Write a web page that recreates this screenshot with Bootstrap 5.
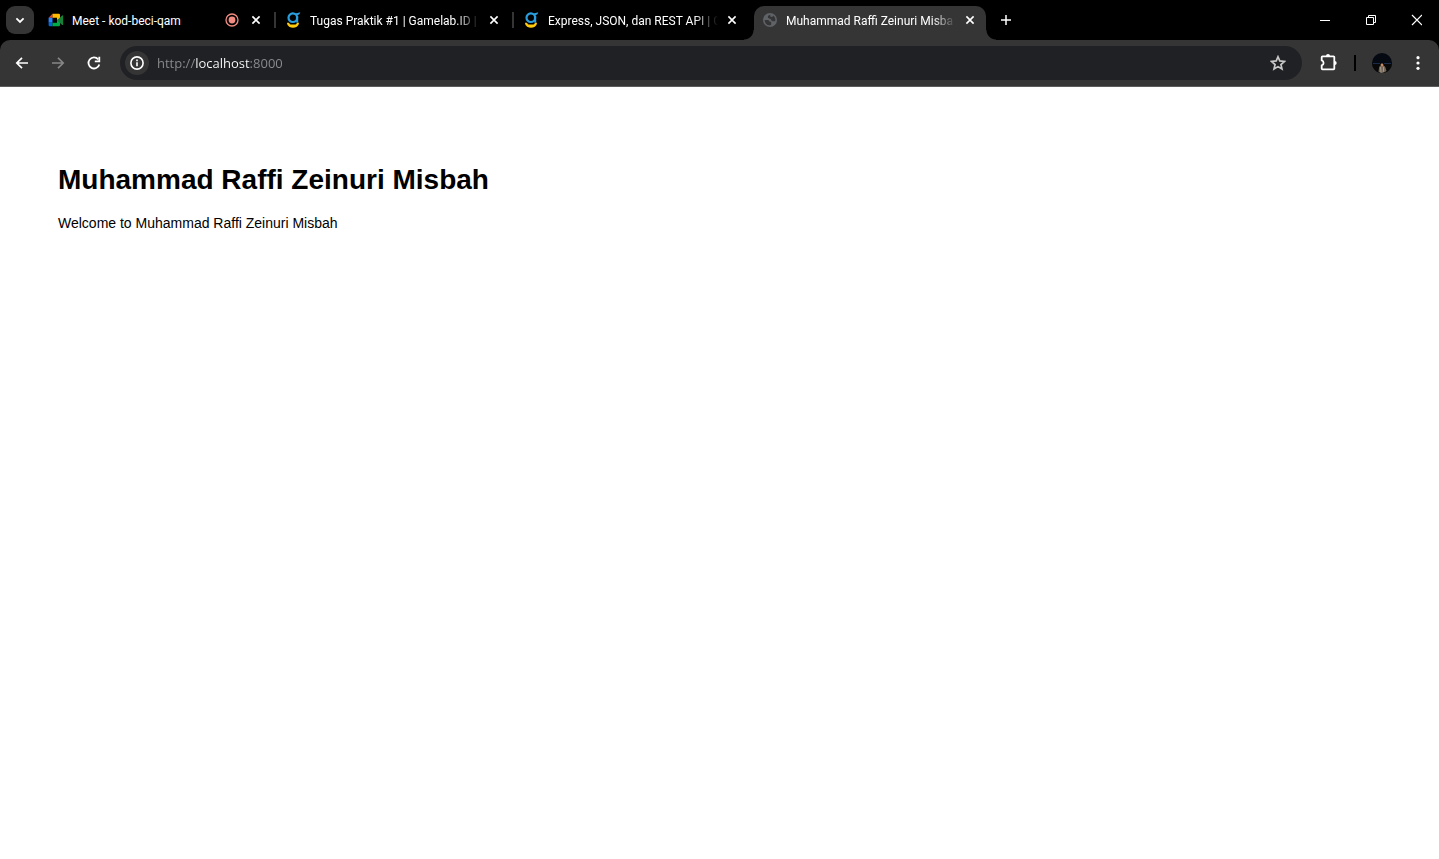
<!DOCTYPE html>
<html lang="id">
<head>
<meta charset="utf-8">
<meta name="viewport" content="width=device-width, initial-scale=1">
<title>Muhammad Raffi Zeinuri Misbah</title>
<link href="https://cdn.jsdelivr.net/npm/bootstrap@5.3.0/dist/css/bootstrap.min.css" rel="stylesheet">
<style>
  body { font-family: "Liberation Sans", Arial, sans-serif; color: #000; }
  svg { display: block; flex: none; }
  .browser { background: #000; font-family: "Open Sans", "Segoe UI", sans-serif; }
  .strip { height: 40px; padding-left: 6px; }
  .tool-btn { border: 0; background: none; color: #fff; padding: 0; display: grid; place-items: center; flex: none; }
  .tool-btn.muted { color: #868686; }
  .tool-btn.star { color: #c7c7c7; }
  .tab-search { width: 28px; height: 28px; border-radius: 9px; background: #353535; margin: 0 6px 0 0; }
  .tab-list { gap: 6px; margin: 6px 0 0; min-width: 0; }
  .tab-item { position: relative; width: 232px; height: 34px; padding: 0 8px 6px; gap: 8px; color: #fff; flex: 0 1 auto; min-width: 0; }
  .tab-item.divided::after { content: ""; position: absolute; left: 234px; top: 6px; width: 2px; height: 16px; background: #353535; }
  .tab-item.current { background: #353535; border-radius: 10px 10px 0 0; }
  .tab-item.current::before, .tab-item.current::after { content: ""; position: absolute; bottom: 0; width: 10px; height: 10px; }
  .tab-item.current::before { left: -10px; background: radial-gradient(circle at 0 0, transparent 9px, #353535 10px); }
  .tab-item.current::after { right: -10px; background: radial-gradient(circle at 100% 0, transparent 9px, #353535 10px); }
  .tab-title { font-family: Roboto, "Segoe UI", sans-serif; font-size: 12px; line-height: 16px; padding-top: 2px; margin-right: -2px; color: #fff; text-decoration: none; white-space: nowrap; overflow: hidden; flex: 1; }
  .fade-end { -webkit-mask-image: linear-gradient(to right, #000 calc(100% - 24px), transparent); mask-image: linear-gradient(to right, #000 calc(100% - 24px), transparent); }
  .tab-close { width: 16px; height: 16px; }
  .new-tab { width: 28px; height: 28px; margin-left: 6px; }
  .win-btn { width: 46px; height: 40px; }
  .toolbar { height: 47px; padding: 6px 7px 6px 8px; background: #353535; border-radius: 10px 10px 0 0; border-bottom: 1px solid #5c5c5c; }
  .nav-btn { width: 28px; height: 28px; margin-right: 8px; }
  .address { height: 34px; border-radius: 17px; background: #202124; padding: 0 16px 0 3px; margin-left: 4px; }
  .site-info { width: 24px; height: 24px; margin: 0 2px; border-radius: 50%; background: #353535; }
  .url { border: 0; outline: 0; padding: 0; margin-left: 6px; height: 28px; min-width: 0; font-size: 13px; color: #9aa0a6;
    background: linear-gradient(to right, #8b8d90 39px, #fff 39px, #fff 93px, #8b8d90 93px);
    -webkit-background-clip: text; background-clip: text; -webkit-text-fill-color: transparent; }
  .bar-sep { width: 2px; height: 16px; background: #000; margin: 0 12px; }
  .page-view { padding: 77px 58px 50px; font-size: 14px; line-height: 16px; }
  .page-view h1 { font-size: 28px; line-height: 32px; font-weight: 700; margin: 0 0 19px; }
</style>
</head>
<body class="bg-white">
<svg width="0" height="0" class="position-absolute" aria-hidden="true">
  <defs>
    <symbol id="x" viewBox="0 0 16 16"><path d="M4.400 4.400l7.200 7.200M11.600 4.400l-7.200 7.200" stroke="currentColor" stroke-width="1.600" fill="none"/></symbol>
    <symbol id="gl" viewBox="0 0 16 16">
      <circle cx="6.800" cy="5.700" r="4.300" fill="none" stroke="#2a9fe0" stroke-width="2.200"/>
      <path d="M9 1.500Q11.500 1.400 14.300.300Q14 3 11.300 3.600z" fill="#2a9fe0"/>
      <path d="M11.200 4v6.600" stroke="#2a9fe0" stroke-width="2"/>
      <path d="M.900 10.800h2.200q.4 1.400 1.400 1.700h5q1-.3 1.400-1.700h2.200q-.2 2.800-2.300 4-1.800.900-3.800.900t-3.800-.900q-2.100-1.200-2.300-4z" fill="#ffc90e"/>
    </symbol>
  </defs>
</svg>

<header class="browser">
  <div class="strip d-flex align-items-center">
    <button class="tool-btn tab-search" aria-label="Search tabs"><svg width="16" height="16" viewBox="0 0 16 16"><path d="M4.400 6.300L8 9.900l3.600-3.600" fill="none" stroke="currentColor" stroke-width="1.800"/></svg></button>
    <nav class="tab-list d-flex align-self-start" aria-label="Tabs">
      <div class="tab-item divided d-flex align-items-center">
        <svg width="16" height="16" viewBox="0 0 16 16"><path d="M.600 5.700L4.500 1.800v3.900z" fill="#ea4335"/><path d="M.600 5.700h3.900v5H.600z" fill="#2684fc"/><path d="M.600 10.700h3.900v3.500H1.800q-1.200 0-1.200-1.200z" fill="#0066da"/><path d="M4.500 1.800h6.300q1.200 0 1.200 1.200v3.200L9 8.300V5.700H4.500z" fill="#ffba00"/><path d="M4.500 10.700H9V8l3-1v6q0 1.200-1.200 1.200H4.500z" fill="#00ac47"/><path d="M9 8.200l5.200-4.800q1-.6 1 .5v8.500q0 1-1 .5z" fill="#188038"/></svg>
        <a class="tab-title" href="#">Meet - kod-beci-qam</a>
        <svg width="16" height="16" viewBox="0 0 16 16" role="img" aria-label="Recording"><circle cx="8" cy="8" r="6" fill="none" stroke="#f28b82" stroke-width="1.300"/><circle cx="8" cy="8" r="3.400" fill="#f28b82"/></svg>
        <button class="tool-btn tab-close" aria-label="Close tab"><svg width="16" height="16"><use href="#x"/></svg></button>
      </div>
      <div class="tab-item divided d-flex align-items-center">
        <svg width="16" height="16"><use href="#gl"/></svg>
        <a class="tab-title fade-end" href="#">Tugas Praktik #1 | Gamelab.ID |</a>
        <button class="tool-btn tab-close" aria-label="Close tab"><svg width="16" height="16"><use href="#x"/></svg></button>
      </div>
      <div class="tab-item d-flex align-items-center">
        <svg width="16" height="16"><use href="#gl"/></svg>
        <a class="tab-title fade-end" href="#">Express, JSON, dan REST API | G</a>
        <button class="tool-btn tab-close" aria-label="Close tab"><svg width="16" height="16"><use href="#x"/></svg></button>
      </div>
      <div class="tab-item current d-flex align-items-center">
        <svg width="16" height="16" viewBox="0 0 16 16"><circle cx="8" cy="8" r="7" fill="#5f6368"/><path d="M2.600 8h3.200q1.600.2 1.800 1.800h1.600v2.600l-1.200 1.200Q2.800 13 2.600 8zM8.200 2.700Q6 3.200 5.800 4.800q-.1 1.500 1.500 1.700 1.800.1 2 1.600.2 1.200 1.700 1.200h2.200Q14 5.300 11 3.400q0 1.500-1.600 1.600-1.400 0-1.200-2.300z" fill="#353535"/></svg>
        <a class="tab-title fade-end" href="#" aria-current="page">Muhammad Raffi Zeinuri Misba</a>
        <button class="tool-btn tab-close" aria-label="Close tab"><svg width="16" height="16"><use href="#x"/></svg></button>
      </div>
    </nav>
    <button class="tool-btn new-tab" aria-label="New tab"><svg width="16" height="16" viewBox="0 0 16 16"><path d="M8 3v10M3 8h10" stroke="currentColor" stroke-width="1.500"/></svg></button>
    <div class="d-flex ms-auto">
      <button class="tool-btn win-btn" aria-label="Minimize"><svg width="12" height="12" viewBox="0 0 12 12"><path d="M2 6.500h10" stroke="currentColor"/></svg></button>
      <button class="tool-btn win-btn" aria-label="Restore"><svg width="12" height="12" viewBox="0 0 12 12"><path d="M2.500 3.500h7v7h-7zM4.500 3.500v-2h7v7h-2" fill="none" stroke="currentColor"/></svg></button>
      <button class="tool-btn win-btn" aria-label="Close"><svg width="12" height="12" viewBox="0 0 12 12"><path d="M2 1l10 10M12 1L2 11" stroke="currentColor" stroke-width="1.200"/></svg></button>
    </div>
  </div>

  <div class="toolbar d-flex align-items-center">
    <button class="tool-btn nav-btn" aria-label="Back"><svg width="16" height="16" viewBox="0 0 16 16"><path d="M14 8H3M8 2.800L2.800 8 8 13.200" fill="none" stroke="currentColor" stroke-width="1.700"/></svg></button>
    <button class="tool-btn muted nav-btn" aria-label="Forward"><svg width="16" height="16" viewBox="0 0 16 16"><path d="M2 8h11M8 2.800L13.200 8 8 13.200" fill="none" stroke="currentColor" stroke-width="1.700"/></svg></button>
    <button class="tool-btn nav-btn" aria-label="Reload"><svg width="16" height="16" viewBox="0 0 16 16"><path d="M13.300 9.400A5.500 5.500 0 1 1 12.200 4.400" fill="none" stroke="currentColor" stroke-width="1.800"/><path d="M14.200 1.800v5.400H8.800V5.400h3.600V1.800z" fill="currentColor"/></svg></button>
    <form class="address d-flex align-items-center flex-fill">
      <button type="button" class="tool-btn site-info" aria-label="Site information"><svg width="16" height="16" viewBox="0 0 16 16"><circle cx="8" cy="8" r="6.100" fill="none" stroke="currentColor" stroke-width="1.600"/><path d="M8 7.300v3.900M8 4.600v1.600" stroke="currentColor" stroke-width="1.600"/></svg></button>
      <input class="url flex-fill" type="text" aria-label="Address" value="http://localhost:8000">
      <button type="button" class="tool-btn star" aria-label="Bookmark"><svg width="16" height="16" viewBox="0 0 18 18"><path d="M9 2l2 4.700 5.300.500-4 3.500 1.200 5.100L9 13.100l-4.500 2.700 1.200-5.100-4-3.500L7 6.700z" fill="none" stroke="currentColor" stroke-width="1.900"/></svg></button>
    </form>
    <button class="tool-btn ms-3" aria-label="Extensions"><svg width="20" height="20" viewBox="0 0 20 20"><path d="M4.500 3.400h11a.8.800 0 0 1 .8.800v11.400a.8.800 0 0 1-.8.800h-11a.8.800 0 0 1-.8-.800v-3.200a2.600 2.600 0 0 0 0-5V4.200a.8.800 0 0 1 .8-.800z" fill="none" stroke="currentColor" stroke-width="1.800" stroke-linejoin="round"/><path d="M8 3a2 2 0 0 1 4 0zM16.700 7.900a2 2 0 0 1 0 4z" fill="currentColor"/></svg></button>
    <span class="bar-sep ms-3"></span>
    <button class="tool-btn" aria-label="Profile"><svg width="28" height="20" viewBox="0 0 28 20"><circle cx="14" cy="10" r="10" fill="#050911"/><path d="M4.200 11.200h19.600l-.6 2.600q-2.600 6.200-9.200 6.200T4.800 13.800z" fill="#080808"/><path d="M5 10.500h7M16 10.500h7" stroke="#1a2b49" stroke-width="1"/><path d="M10.500 18.800l.7-5 2-1.500h2l2 1.400 1.300 4.300q-2 1.700-4.500 1.900-2 0-3.500-1.100z" fill="#74675a"/><path d="M12.600 14l.4 5.600M15.600 13.800l-.2 5" stroke="#a59b8c"/><circle cx="14" cy="12" r="1.400" fill="#c98a60"/></svg></button>
    <button class="tool-btn ms-2" aria-label="Menu"><svg width="28" height="20" viewBox="0 0 28 20"><g fill="currentColor"><circle cx="14" cy="4.700" r="1.600"/><circle cx="14" cy="10" r="1.600"/><circle cx="14" cy="15.300" r="1.600"/></g></svg></button>
  </div>
</header>

<main class="page-view">
  <h1>Muhammad Raffi Zeinuri Misbah</h1>
  <p class="mb-0">Welcome to Muhammad Raffi Zeinuri Misbah</p>
</main>
<script src="https://cdn.jsdelivr.net/npm/bootstrap@5.3.0/dist/js/bootstrap.bundle.min.js"></script>
</body>
</html>
